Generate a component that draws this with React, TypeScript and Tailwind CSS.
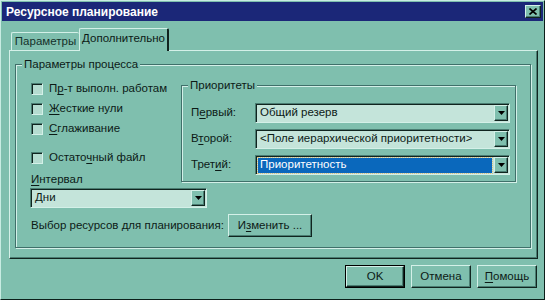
import React from 'react';

const raised =
  'border border-t-[#d4f0e8] border-l-[#d4f0e8] border-r-[#10241f] border-b-[#10241f] shadow-[inset_-1px_-1px_0_#4a7d72]';
const sunken =
  'border border-t-[#4a7d72] border-l-[#4a7d72] border-r-[#d4f0e8] border-b-[#d4f0e8] shadow-[inset_1px_1px_0_#10241f]';

function U({ children }: { children: React.ReactNode }) {
  return <span className="underline underline-offset-2">{children}</span>;
}

function Check({ children }: { children: React.ReactNode }) {
  return (
    <div className="h-[20px] flex items-center">
      <div className={`w-[12px] h-[12px] bg-[#b4dcd0] ${sunken}`} />
      <span className="ml-[6px] whitespace-nowrap">{children}</span>
    </div>
  );
}

function Combo({ text, width, selected }: { text: string; width: string; selected?: boolean }) {
  return (
    <div className={`${width} h-[20px] flex bg-[#c4e4da] ${sunken} p-px`}>
      <div className="flex-1 flex items-center min-w-0 pl-[1px] pr-[2px]">
        {selected ? (
          <div className="w-full h-[15px] bg-[#0a68bc] text-white flex items-center pl-[2px] outline outline-1 outline-dotted outline-[#e0c080]">
            {text}
          </div>
        ) : (
          <span className="pl-[2px] truncate">{text}</span>
        )}
      </div>
      <div className={`w-[14px] h-full bg-[#7fbfae] ${raised} flex items-center justify-center`}>
        <svg width="7" height="4" viewBox="0 0 7 4">
          <path d="M0 0h7L3.5 4z" fill="#000" />
        </svg>
      </div>
    </div>
  );
}

function Btn({ children, def, w }: { children: React.ReactNode; def?: boolean; w: string }) {
  return (
    <div className={`${w} h-[23px] ${def ? 'border border-black' : ''}`}>
      <div className={`w-full h-full bg-[#7fbfae] ${raised} flex items-center justify-center whitespace-nowrap`}>{children}</div>
    </div>
  );
}

export default function App() {
  return (
    <div className="w-[545px] h-[300px] bg-[#7fbfae] font-['Liberation_Sans',Arial,sans-serif] text-[11.5px] text-[#0c1a16] border border-t-[#c8ece2] border-l-[#c8ece2] border-r-[#0c1f1a] border-b-[#0c1f1a] p-px flex flex-col">
      {/* title */}
      <div className="h-[19px] bg-[#1b2778] flex items-center pl-[4px] pr-[2px]">
        <span className="text-white font-bold text-[12px] flex-1">Ресурсное планирование</span>
        <div className={`w-[16px] h-[13px] bg-[#7fbfae] ${raised} flex items-center justify-center`}>
          <svg width="8" height="7" viewBox="0 0 8 7">
            <path d="M0.5 0.5L7.5 6.5M7.5 0.5L0.5 6.5" stroke="#000" strokeWidth="1.6" />
          </svg>
        </div>
      </div>

      {/* tabs */}
      <div className="flex items-end ml-[9px] mt-[7px] h-[22px] relative z-10">
        <div className="w-[68px] h-[18px] border-t border-l border-[#d4f0e8] rounded-t-[2px] flex items-center justify-center text-[#14302a]">
          Параметры
        </div>
        <div className="w-[90px] h-[23px] -mb-px bg-[#7fbfae] border-t border-l border-[#d4f0e8] border-r-2 border-r-[#10241f] rounded-t-[2px] flex items-center justify-center pb-[2px]">
          Дополнительно
        </div>
      </div>

      {/* panel */}
      <div className="ml-[7px] w-[529px] h-[209px] border border-t-[#d4f0e8] border-l-[#d4f0e8] border-r-[#10241f] border-b-[#10241f] shadow-[inset_-1px_-1px_0_#4a7d72]">
        <div className="relative ml-[5px] mt-[13px] w-[516px] h-[184px] border border-[#40706a] shadow-[inset_1px_1px_0_#d4f0e8,1px_1px_0_#d4f0e8]">
          <span className="absolute left-[6px] -top-[9px] bg-[#7fbfae] px-[2px]">Параметры процесса</span>

          <div className="flex">
            <div className="w-[165px] pl-[15px] pt-[14px] flex flex-col">
              <Check>П<U>р</U>-т выполн. работам</Check>
              <Check><U>Ж</U>есткие нули</Check>
              <Check><U>С</U>глаживание</Check>
              <div className="mt-[9px]">
                <Check>Остато<U>ч</U>ный файл</Check>
              </div>
              <div className="h-[14px] mt-[5px] flex items-center"><span><U>И</U>нтервал</span></div>
            </div>

            <div className="relative mt-[20px] w-[335px] h-[97px] border border-[#40706a] shadow-[inset_1px_1px_0_#d4f0e8,1px_1px_0_#d4f0e8]">
              <span className="absolute left-[6px] -top-[9px] bg-[#7fbfae] px-[2px]">Приоритеты</span>
              <div className="mt-[17px] ml-[9px] flex flex-col gap-[6px]">
                <div className="flex items-center">
                  <span className="w-[64px]">П<U>е</U>рвый:</span>
                  <Combo text="Общий резерв" width="w-[255px]" />
                </div>
                <div className="flex items-center">
                  <span className="w-[64px]">В<U>т</U>орой:</span>
                  <Combo text="<Поле иерархической приоритетности>" width="w-[255px]" />
                </div>
                <div className="flex items-center">
                  <span className="w-[64px]">Трет<U>и</U>й:</span>
                  <Combo text="Приоритетность" width="w-[255px]" selected />
                </div>
              </div>
            </div>
          </div>

          <div className="ml-[14px] mt-[1px]">
            <Combo text="Дни" width="w-[177px]" />
          </div>

          <div className="ml-[15px] mt-[6px] flex items-center">
            <span className="w-[197px] whitespace-nowrap">Выбор ресурсов для планирования:</span>
            <Btn w="w-[84px]">И<U>з</U>менить ...</Btn>
          </div>
        </div>
      </div>

      {/* bottom buttons */}
      <div className="mt-[6px] flex justify-end gap-[6px] pr-[6px]">
        <Btn w="w-[60px]" def>OK</Btn>
        <Btn w="w-[60px]">Отмена</Btn>
        <Btn w="w-[60px]"><U>П</U>омощь</Btn>
      </div>
    </div>
  );
}
